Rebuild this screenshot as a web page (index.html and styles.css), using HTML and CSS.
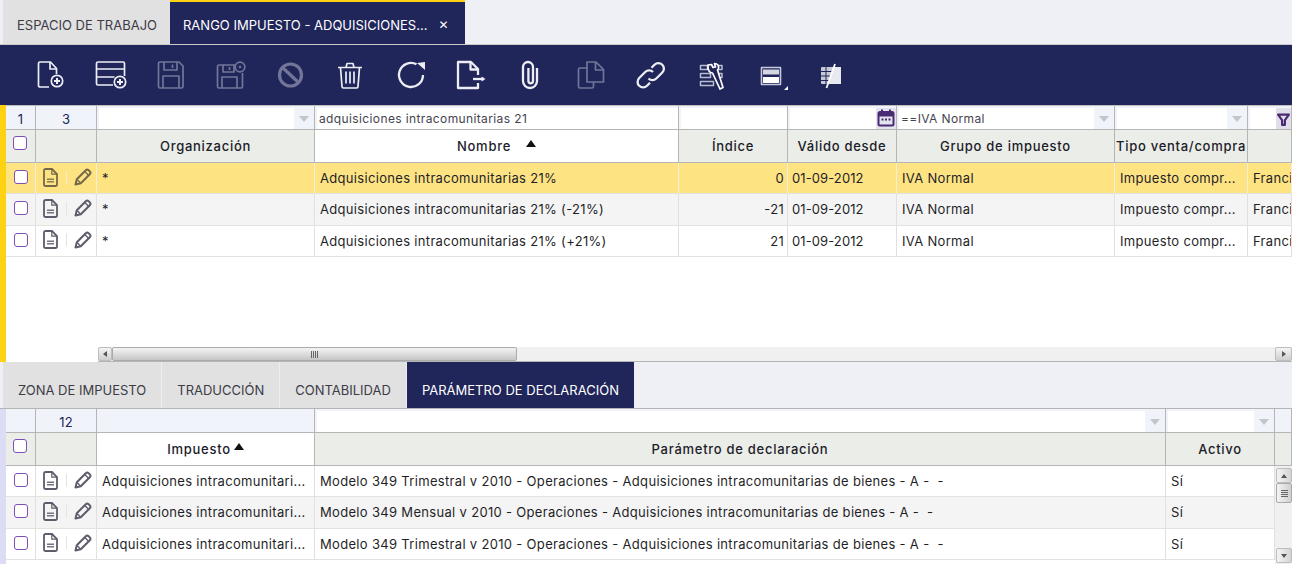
FILE: index.html
```html
<!DOCTYPE html>
<html lang="es">
<head>
<meta charset="utf-8">
<title>Rango impuesto</title>
<link rel="stylesheet" href="styles.css">
</head>
<body>

<svg class="defs" width="0" height="0">
  <symbol id="i-doc" viewBox="0 0 15 19">
    <path d="M2.500 1h6.500l5 5v10.500a1.500 1.500 0 0 1-1.500 1.500h-10A1.500 1.500 0 0 1 1 16.500V2.500A1.500 1.500 0 0 1 2.500 1z" fill="none" stroke="currentColor" stroke-width="1.800"/>
    <path d="M8.800 1.500v4.700h4.700" fill="none" stroke="currentColor" stroke-width="1.200"/>
    <path d="M4 10.500h7v1.600H4zM4 13h7v1.600H4z" fill="currentColor" opacity=".85"/>
  </symbol>
  <symbol id="i-pen" viewBox="0 0 18 18">
    <path d="M2.800 11.200 11.800 2.200a2 2 0 0 1 2.800 0l1.200 1.200a2 2 0 0 1 0 2.800L6.800 15.200 1.500 16.500z" fill="none" stroke="currentColor" stroke-width="2" stroke-linejoin="round"/>
    <path d="M10.800 3.500l3.700 3.700M3 11.500l3.500 3.500" fill="none" stroke="currentColor" stroke-width="1.300"/>
  </symbol>
  <symbol id="i-caret" viewBox="0 0 10 6"><path d="M0 0h10L5 6z" fill="currentColor"/></symbol>
</svg>

<nav class="tabs">
  <div class="tab">ESPACIO DE TRABAJO</div>
  <div class="tab tab-active">RANGO IMPUESTO - ADQUISICIONES...<span class="tab-close">&#10005;</span></div>
</nav>

<div class="toolbar">
  <span class="tb"><svg viewBox="0 0 32 32"><path d="M15 28H6a1.500 1.500 0 0 1-1.500-1.500v-22A1.500 1.500 0 0 1 6 3h10.500l6 6.500V15"/><path d="M16 3v7h6.500"/><circle cx="23" cy="22" r="5.700"/><path d="M20 22h6M23 19v6" class="bold"/></svg></span>
  <span class="tb"><svg viewBox="0 0 32 32"><path d="M19 26H4a1.500 1.500 0 0 1-1.500-1.500v-20A1.500 1.500 0 0 1 4 3h25a1.500 1.500 0 0 1 1.500 1.500V17"/><path d="M2.500 10h28M2.500 18h18"/><circle cx="26" cy="23" r="5.700"/><path d="M23 23h6M26 20v6" class="bold"/></svg></span>
  <span class="tb off"><svg viewBox="0 0 32 32"><path d="M6 3h19l4 4v20.500a1.500 1.500 0 0 1-1.500 1.500H6a1.500 1.500 0 0 1-1.500-1.500v-23A1.500 1.500 0 0 1 6 3z"/><path d="M10 3v8h13V3M18.500 5.500v3.500M9 29V17h16v12"/></svg></span>
  <span class="tb off"><svg viewBox="0 0 32 32"><path d="M21 6H5a1.500 1.500 0 0 0-1.500 1.500V27.500A1.500 1.500 0 0 0 5 29h22a1.500 1.500 0 0 0 1.500-1.500V14"/><path d="M9 6v7h11V6M15.500 8v3M8 29V18h15v11"/><circle cx="26" cy="8" r="4.800"/><circle cx="26" cy="8" r="1.300" class="solid"/></svg></span>
  <span class="tb off"><svg viewBox="0 0 32 32" class="thick"><circle cx="16.500" cy="16" r="11"/><path d="M8.500 8.500l16 15"/></svg></span>
  <span class="tb"><svg viewBox="0 0 32 32"><path d="M4 8.500h24M12 8.500L13 4.500h6l1 4M6.500 8.500 8 27.500A1.500 1.500 0 0 0 9.500 29h13a1.500 1.500 0 0 0 1.500-1.500L25.500 8.500"/><path d="M12 12.500v12M16 12.500v12M20 12.500v12"/></svg></span>
  <span class="tb"><svg viewBox="0 0 32 32" class="mid"><path d="M22.500 5.300A12 12 0 1 0 29 16"/><path d="M23 4 31 3v8z" class="solid"/></svg></span>
  <span class="tb"><svg viewBox="0 0 32 32" class="mid"><path d="M24 16V10l-7-7H4v26h20v-5"/><path d="M16.500 3v7.500H24"/><path d="M19 20h11" /><path d="M27.500 17.500l4 2.500-4 2.500z" class="solid"/></svg></span>
  <span class="tb"><svg viewBox="0 0 32 32" class="mid"><path d="M23 9v13a7 7 0 0 1-14 0V8a5 5 0 0 1 10 0v14a2.300 2.300 0 0 1-4.600 0V9"/></svg></span>
  <span class="tb off"><svg viewBox="0 0 32 32"><path d="M13 9H6a1.500 1.500 0 0 0-1.500 1.500v17A1.500 1.500 0 0 0 6 29h12a1.500 1.500 0 0 0 1.500-1.500V23"/><path d="M13 3h9l7.500 7.500V23H13z"/><path d="M21.500 3v8H29.500"/></svg></span>
  <span class="tb"><svg viewBox="0 0 32 32" class="mid"><path d="M14.500 19.500a5.500 5.500 0 0 0 7.800 0l6-6a5.500 5.500 0 0 0-7.800-7.800l-3 3"/><path d="M19 13a5.500 5.500 0 0 0-7.800 0l-6 6a5.500 5.500 0 0 0 7.800 7.800l3-3"/></svg></span>
  <span class="tb"><svg viewBox="0 0 32 32" class="dim"><path d="M6.500 6.500h7v4h-7zM21 6.500h7v4h-4M6.500 14.500h10v4h-10zM22 14.500h6v4h-3.500M6.500 22.500h13v4h-13z"/><path d="M14 6l3.500-.500 1.500 3 2.500-.500-1-3.500c3 0 5 2.500 3.800 5.500l-.800 1L29 28.500 26 30 18.500 14c-3 0-5-3-4.500-8z" class="bright"/></svg></span>
  <span class="tb tb-split"><svg viewBox="0 0 32 32" class="plain"><rect x="7.500" y="8.500" width="19" height="17" fill="#20255a" stroke="#c6cad9" stroke-width="1.600"/><rect x="9" y="10.500" width="16" height="5" fill="#d4d6e0"/><rect x="9" y="18" width="16" height="6" fill="#fff"/></svg><i class="tb-corner"></i></span>
  <span class="tb"><svg viewBox="0 0 32 32" class="plain"><rect x="7" y="8" width="20" height="17" rx="1" fill="#c6c9d6"/><path d="M7 12.500h20M7 17h20M7 21.500h20M12 8v17" stroke="#20255a" stroke-width="1"/><path d="M19 8h8v17H14z" fill="#e8e9ef"/><path d="M21 5 12.500 29" stroke="#fff" stroke-width="1.800" fill="none"/></svg></span>
</div>

<section class="panel panel-top">
  <div class="grid cols-top">
    <div class="row filters">
      <div class="cell count num-gray">1</div>
      <div class="cell count">3</div>
      <div class="cell filter"><span class="field"></span><span class="drop"><svg><use href="#i-caret"/></svg></span></div>
      <div class="cell filter"><span class="field">adquisiciones intracomunitarias 21</span></div>
      <div class="cell filter"><span class="field"></span></div>
      <div class="cell filter"><span class="field"></span><span class="cal"><svg viewBox="0 0 18 18" fill="none" stroke="#4a2a72" stroke-width="2"><rect x="1.500" y="3" width="15" height="13.500" rx="1.500"/><path d="M1.500 5.500h15" stroke-width="4"/><path d="M5 .5v3M13 .5v3" stroke-width="2"/><path d="M4.500 10.500h2M8 10.500h2M11.500 10.500h2" stroke-width="1.800"/></svg></span></div>
      <div class="cell filter"><span class="field">==IVA Normal</span><span class="drop"><svg><use href="#i-caret"/></svg></span></div>
      <div class="cell filter"><span class="field"></span><span class="drop"><svg><use href="#i-caret"/></svg></span></div>
      <div class="cell filter last"><span class="field"></span><span class="funnel"><svg viewBox="0 0 12 12"><path d="M1 1.500h10L7.300 6.500V11H4.700V6.500z" fill="none" stroke="#4a2a72" stroke-width="2" stroke-linejoin="round"/></svg></span></div>
    </div>
    <div class="row head">
      <div class="cell"><span class="check"></span></div>
      <div class="cell"></div>
      <div class="cell">Organización</div>
      <div class="cell sorted">Nombre<svg class="sort sort-gap" viewBox="0 0 10 7"><path d="M0 7h10L5 0z"/></svg></div>
      <div class="cell">Índice</div>
      <div class="cell">Válido desde</div>
      <div class="cell">Grupo de impuesto</div>
      <div class="cell tight">Tipo venta/compra</div>
      <div class="cell"></div>
    </div>
    <div class="row data selected">
      <div class="cell"><span class="check"></span></div>
      <div class="cell acts"><svg class="doc"><use href="#i-doc"/></svg><i class="sep"></i><svg class="pen"><use href="#i-pen"/></svg></div>
      <div class="cell">*</div>
      <div class="cell">Adquisiciones intracomunitarias 21%</div>
      <div class="cell num">0</div>
      <div class="cell date">01-09-2012</div>
      <div class="cell">IVA Normal</div>
      <div class="cell">Impuesto compr...</div>
      <div class="cell clip">Francia</div>
    </div>
    <div class="row data alt">
      <div class="cell"><span class="check"></span></div>
      <div class="cell acts"><svg class="doc"><use href="#i-doc"/></svg><i class="sep"></i><svg class="pen"><use href="#i-pen"/></svg></div>
      <div class="cell">*</div>
      <div class="cell">Adquisiciones intracomunitarias 21% (-21%)</div>
      <div class="cell num">-21</div>
      <div class="cell date">01-09-2012</div>
      <div class="cell">IVA Normal</div>
      <div class="cell">Impuesto compr...</div>
      <div class="cell clip">Francia</div>
    </div>
    <div class="row data">
      <div class="cell"><span class="check"></span></div>
      <div class="cell acts"><svg class="doc"><use href="#i-doc"/></svg><i class="sep"></i><svg class="pen"><use href="#i-pen"/></svg></div>
      <div class="cell">*</div>
      <div class="cell">Adquisiciones intracomunitarias 21% (+21%)</div>
      <div class="cell num">21</div>
      <div class="cell date">01-09-2012</div>
      <div class="cell">IVA Normal</div>
      <div class="cell">Impuesto compr...</div>
      <div class="cell clip">Francia</div>
    </div>
    <div class="spacer"></div>
    <div class="hscroll">
      <span class="sb-btn"><i class="tri tri-left"></i></span>
      <span class="sb-thumb"><i class="grip"></i></span>
      <span class="sb-track"></span>
      <span class="sb-btn"><i class="tri tri-right"></i></span>
    </div>
  </div>
</section>

<nav class="subtabs">
  <div class="subtab">ZONA DE IMPUESTO</div>
  <div class="subtab">TRADUCCIÓN</div>
  <div class="subtab">CONTABILIDAD</div>
  <div class="subtab subtab-active">PARÁMETRO DE DECLARACIÓN</div>
</nav>

<section class="panel panel-bottom">
  <div class="grid cols-bottom">
    <div class="row filters">
      <div class="cell count"></div>
      <div class="cell count">12</div>
      <div class="cell count"></div>
      <div class="cell filter"><span class="field"></span><span class="drop"><svg><use href="#i-caret"/></svg></span></div>
      <div class="cell filter"><span class="field"></span><span class="drop"><svg><use href="#i-caret"/></svg></span></div>
      <div class="cell count"></div>
    </div>
    <div class="row head">
      <div class="cell"><span class="check"></span></div>
      <div class="cell"></div>
      <div class="cell sorted">Impuesto<svg class="sort" viewBox="0 0 10 7"><path d="M0 7h10L5 0z"/></svg></div>
      <div class="cell">Parámetro de declaración</div>
      <div class="cell">Activo</div>
      <div class="cell"></div>
    </div>
    <div class="body-wrap">
      <div class="rows">
        <div class="row data">
          <div class="cell"><span class="check"></span></div>
          <div class="cell acts"><svg class="doc"><use href="#i-doc"/></svg><i class="sep"></i><svg class="pen"><use href="#i-pen"/></svg></div>
          <div class="cell clip">Adquisiciones intracomunitari...</div>
          <div class="cell">Modelo 349 Trimestral v 2010 - Operaciones - Adquisiciones intracomunitarias de bienes - A -&nbsp; -</div>
          <div class="cell">Sí</div>
        </div>
        <div class="row data alt">
          <div class="cell"><span class="check"></span></div>
          <div class="cell acts"><svg class="doc"><use href="#i-doc"/></svg><i class="sep"></i><svg class="pen"><use href="#i-pen"/></svg></div>
          <div class="cell clip">Adquisiciones intracomunitari...</div>
          <div class="cell">Modelo 349 Mensual v 2010 - Operaciones - Adquisiciones intracomunitarias de bienes - A -&nbsp; -</div>
          <div class="cell">Sí</div>
        </div>
        <div class="row data">
          <div class="cell"><span class="check"></span></div>
          <div class="cell acts"><svg class="doc"><use href="#i-doc"/></svg><i class="sep"></i><svg class="pen"><use href="#i-pen"/></svg></div>
          <div class="cell clip">Adquisiciones intracomunitari...</div>
          <div class="cell">Modelo 349 Trimestral v 2010 - Operaciones - Adquisiciones intracomunitarias de bienes - A -&nbsp; -</div>
          <div class="cell">Sí</div>
        </div>
      </div>
      <div class="vscroll">
        <span class="vb-btn"><i class="tri tri-up"></i></span>
        <span class="vb-thumb"><i class="vgrip"></i></span>
        <span class="vb-track"></span>
        <span class="vb-btn"><i class="tri tri-down"></i></span>
      </div>
    </div>
  </div>
</section>

</body>
</html>
```

FILE: styles.css
```css
* { box-sizing: border-box; }

html, body {
  margin: 0;
  height: 564px;
  overflow: hidden;
}

body {
  background: #eef0f6;
  color: #20223a;
  font-family: "Inter", "DejaVu Sans", sans-serif;
  font-size: 13px;
}

.defs { display: block; height: 0; }

/* top tabs */
.tabs {
  display: flex;
  height: 45px;
  padding-left: 3px;
  border-bottom: 1px solid #c9c9c9;
}
.tab {
  display: flex;
  align-items: center;
  width: 167px;
  padding: 6px 0 0 14px;
  background: #e1e1e1;
  color: #3c3c46;
  font-size: 13px;
  white-space: nowrap;
}
.tab-active {
  width: 295px;
  background: #20255a;
  border-top: 2px solid #fdd213;
  color: #fff;
  padding: 3px 0 0 13px;
}
.tab-close {
  margin-left: 11px;
  font-size: 12px;
  font-weight: bold;
}

/* toolbar */
.toolbar {
  display: flex;
  height: 60px;
  padding-left: 20px;
  background: #20255a;
  color: #fff;
}
.tb {
  display: flex;
  align-items: center;
  justify-content: center;
  width: 60px;
}
.tb svg {
  display: block;
  width: 32px;
  height: 32px;
  overflow: visible;
  fill: none;
  stroke: #eceef4;
  stroke-width: 1.700;
  stroke-linejoin: round;
}
.tb .bold { stroke-width: 2; }
.tb .solid { fill: #eceef4; stroke: none; }
.tb .thick { stroke-width: 3.200; }
.tb .mid { stroke-width: 2.300; }
.tb .dim { stroke: #b9bdd0; stroke-width: 1.500; }
.tb .bright { stroke: #fff; fill: #20255a; stroke-width: 1.700; }
.tb .plain { stroke: none; }
.off { opacity: .4; }
.tb-split { position: relative; }
.tb-corner {
  position: absolute;
  left: 44px;
  top: 41px;
  border-left: 4px solid transparent;
  border-bottom: 4px solid #fff;
}

/* grids */
.panel {
  background: #fff;
  border-left: 6px solid #fdd213;
}
.panel-top { height: 257px; }
.panel-bottom {
  height: 155px;
  border-left-color: #dcdcf4;
}
.grid { height: 100%; display: flex; flex-direction: column; }

.row { display: grid; flex: none; }
.cols-top .row { grid-template-columns: 30px 61px 218px 364px 109px 109px 218px 133px 44px; }
.cols-bottom .row { grid-template-columns: 30px 61px 218px 851px 109px 17px; }
.cols-bottom .rows .row { grid-template-columns: 30px 61px 218px 851px 109px; }

.cell {
  display: flex;
  align-items: center;
  min-width: 0;
  border-right: 1px solid #e0e0e0;
  white-space: nowrap;
}

/* filter row */
.filters {
  height: 25px;
  background: #f0f3f9;
  border-top: 1px solid #bdbdbd;
  border-bottom: 1px solid #b5b5b5;
}
.panel-bottom .filters { height: 24px; border-top: 0; }
.filters .cell { border-right: 1px solid #b5b5b5; }
.count {
  justify-content: center;
  padding-top: 2px;
  color: #20255a;
  letter-spacing: .2px;
}
.filter { padding: 2px 0 0 2px; }
.field {
  flex: 1;
  height: 100%;
  padding: 3px 0 0 2px;
  background: #fff;
  color: #44444e;
  font-size: 12px;
  letter-spacing: .38px;
}
.drop {
  display: flex;
  align-items: center;
  justify-content: center;
  width: 20px;
  height: 100%;
}
.drop svg { width: 10px; height: 6px; color: #c3c5cc; }
.cal { width: 20px; height: 100%; background: #e4e4ee; padding: 1px; }
.cal svg { display: block; width: 18px; height: 18px; }
.funnel { width: 15px; height: 100%; background: #dfdfe9; padding: 5px 1px 0; }
.funnel svg { display: block; width: 13px; height: 13px; }

/* header row */
.head {
  height: 33px;
  background: #ebede8;
  border-bottom: 1px solid #b5b5b5;
  font-weight: 500;
  color: #1c1c2a;
  letter-spacing: .72px;
}
.head .cell {
  justify-content: center;
  border-right: 1px solid #b5b5b5;
}
.head .sorted { background: #fff; }
.head .tight { justify-content: flex-start; padding-left: 1px; }
.sort { width: 10px; height: 7px; margin: 0 0 5px 3px; fill: #111; }
.sort-gap { margin-left: 15px; }

/* data rows */
.data {
  height: 31.330px;
  border-bottom: 1px solid #e2e2e2;
  color: #1f1f28;
  letter-spacing: .32px;
}
.data .cell { padding-left: 5px; }
.data .cell:first-child { padding-left: 0; padding-bottom: 2px; justify-content: center; }
.data .date { letter-spacing: .1px; padding-left: 4px; }
.alt { background: #f4f4f4; }
.selected { background: #fee383; }
.selected .cell { border-right-color: #f2f0dc; }
.selected .acts { color: #75684a; }
.num { justify-content: flex-end; padding-right: 3px; }
.clip { overflow: hidden; }

.check {
  display: block;
  width: 14px;
  height: 14px;
  background: #fff;
  border: 1px solid #7e4fb8;
  border-radius: 3px;
}
.head .cell:first-child { padding: 0 1px 6px 0; }

.acts { color: #5d5d6b; }
.data .acts { padding-left: 7px; padding-bottom: 2px; }
.doc { width: 15px; height: 19px; flex: none; }
.sep {
  width: 1px;
  height: 13px;
  margin: 0 7px 0 8px;
  background: #e4e4e4;
}
.selected .sep { background: #f4efd0; }
.pen { width: 18px; height: 18px; flex: none; }

/* scrollbars */
.spacer { flex: 1; }
.hscroll {
  display: flex;
  height: 15px;
  margin-left: 92px;
  flex: none;
  background: #f0f0f0;
  border-bottom: 1px solid #b5b5b5;
}
.sb-btn {
  display: flex;
  align-items: center;
  justify-content: center;
  width: 14px;
  background: linear-gradient(#f4f4f4, #cfcfcf);
  border: 1px solid #bdbdbd;
  border-radius: 2px;
}
.sb-btn:last-child { width: 17px; }
.sb-thumb {
  display: flex;
  align-items: center;
  justify-content: center;
  width: 405px;
  background: linear-gradient(#f4f4f4, #c6c6c6);
  border: 1px solid #aaa;
  border-radius: 2px;
}
.sb-track { flex: 1; }
.grip {
  width: 7px;
  height: 7px;
  background: repeating-linear-gradient(90deg, #666 0 1px, transparent 1px 2px);
}
.tri { display: block; width: 0; height: 0; }
.tri-left { border: 3px solid transparent; border-left: 0; border-right: 4px solid #555; }
.tri-right { border: 3px solid transparent; border-right: 0; border-left: 4px solid #555; }
.tri-up { border: 3px solid transparent; border-top: 0; border-bottom: 4px solid #555; }
.tri-down { border: 3px solid transparent; border-bottom: 0; border-top: 4px solid #555; }

.body-wrap { display: flex; flex: 1; min-height: 0; }
.rows { width: 1269px; flex: none; }
.vscroll {
  display: flex;
  flex-direction: column;
  flex: 1;
  padding: 2px 0 1px 1px;
  background: #f0f0f0;
}
.vb-btn {
  display: flex;
  align-items: center;
  justify-content: center;
  height: 15px;
  background: linear-gradient(90deg, #f4f4f4, #d4d4d4);
  border: 1px solid #bdbdbd;
  border-radius: 2px;
}
.vb-thumb {
  display: flex;
  align-items: center;
  justify-content: center;
  height: 20px;
  background: linear-gradient(90deg, #f4f4f4, #cfcfcf);
  border: 1px solid #aaa;
  border-radius: 2px;
}
.vb-track { flex: 1; }
.vgrip {
  width: 7px;
  height: 7px;
  background: repeating-linear-gradient(#666 0 1px, transparent 1px 2px);
}

/* detail tabs */
.subtabs {
  display: flex;
  height: 47px;
  padding-left: 3px;
  border-bottom: 1px solid #b5b5b5;
}
.subtab {
  display: flex;
  align-items: center;
  padding: 9px 15px 0 15px;
  background: #e1e1e1;
  border-right: 1px solid #eee;
  color: #3c3c46;
  font-size: 13px;
  white-space: nowrap;
}
.subtab-active {
  background: #20255a;
  border-right: 0;
  color: #fff;
}
```
